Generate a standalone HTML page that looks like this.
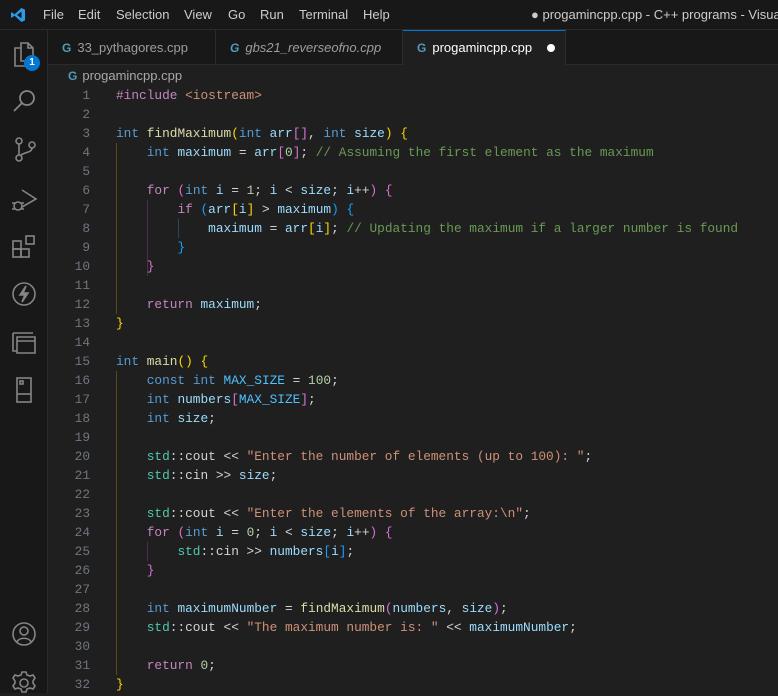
<!DOCTYPE html>
<html><head><meta charset="utf-8"><style>
*{margin:0;padding:0;box-sizing:border-box}
body{width:778px;height:693px;background:#1f1f1f;overflow:hidden;position:relative;font-family:"Segoe UI","Liberation Sans",sans-serif;color:#ccc}
#title{position:absolute;left:0;top:0;width:778px;height:30px;background:#181818;border-bottom:1px solid #2b2b2b;font-size:13px;overflow:hidden;white-space:nowrap}
#title span{position:absolute;top:7px;color:#ccc;white-space:nowrap}
#act{position:absolute;left:0;top:30px;width:48px;height:663px;background:#181818;border-right:1px solid #2b2b2b}
#tabs{position:absolute;left:48px;top:30px;width:730px;height:35px;background:#181818;border-bottom:1px solid #2b2b2b}
.tab{position:absolute;top:0;height:35px;border-right:1px solid #2b2b2b;font-size:13px;color:#9d9d9d;padding:10px 0 0 14px;white-space:nowrap}
.tab b{color:#519aba;font-weight:bold;margin-right:6px;font-size:12px}
.ln{position:absolute;left:48px;width:42px;text-align:right;color:#6e7681;font:12.8px/19px "Liberation Mono",monospace}
.cd{position:absolute;left:116px;white-space:pre;color:#d4d4d4;font:12.8px/19px "Liberation Mono",monospace}
.k{color:#569cd6}.f{color:#dcdcaa}.v{color:#9cdcfe}.c{color:#c586c0}.cm{color:#6a9955}.s{color:#ce9178}.n{color:#b5cea8}.t{color:#4ec9b0}.y{color:#ffd700}.p{color:#da70d6}.b{color:#179fff}.m{color:#4fc1ff}
.g{position:absolute;width:1px}
</style></head><body>
<div id="title">
<svg style="position:absolute;left:10px;top:7px" width="16" height="16" viewBox="0 0 16 16"><path d="M11.5 1 L15 2.6 V13.4 L11.5 15 L4.5 8.6 L1.8 10.7 L1 10.2 V5.8 L1.8 5.3 L4.5 7.4 Z M11.5 4.6 L7 8 L11.5 11.4 Z" fill="#2b9ae8"/></svg>
<span style="left:43px">File</span><span style="left:78px">Edit</span><span style="left:116px">Selection</span><span style="left:184px">View</span><span style="left:228px">Go</span><span style="left:260px">Run</span><span style="left:299px">Terminal</span><span style="left:363px">Help</span>
<span style="left:531px">● progamincpp.cpp - C++ programs - Visual Studio Code</span>
</div>
<div id="act">
<svg style="position:absolute;left:11px;top:10px" width="28" height="30" viewBox="0 0 28 30" fill="none" stroke="#858585" stroke-width="1.6"><path d="M10 3h7l5 5v13H10z M17 3v5h5 M10 8H4v18h12v-5"/></svg>
<div style="position:absolute;left:24px;top:25px;width:16px;height:16px;border-radius:8px;background:#0078d4;color:#fff;font-size:10px;font-weight:bold;text-align:center;line-height:16px">1</div>
<svg style="position:absolute;left:12px;top:58px" width="26" height="26" viewBox="0 0 26 26" fill="none" stroke="#858585" stroke-width="1.8"><circle cx="15" cy="10" r="7"/><path d="M10 15L2 23"/></svg>
<svg style="position:absolute;left:12px;top:106px" width="26" height="28" viewBox="0 0 26 28" fill="none" stroke="#858585" stroke-width="1.6"><circle cx="7" cy="5" r="3"/><circle cx="7" cy="22" r="3"/><circle cx="20" cy="9" r="3"/><path d="M7 8v11 M20 12c0 5-9 4-12 8"/></svg>
<svg style="position:absolute;left:10px;top:158px" width="28" height="26" viewBox="0 0 28 26" fill="none" stroke="#858585" stroke-width="1.6"><path d="M12 2l14 9-14 8"/><circle cx="8" cy="18" r="4"/><path d="M2 15h3 M11 15h3 M2 21h3 M11 21h3"/></svg>
<svg style="position:absolute;left:11px;top:203px" width="28" height="28" viewBox="0 0 28 28" fill="none" stroke="#858585" stroke-width="1.6"><rect x="2" y="8" width="8" height="8"/><rect x="2" y="16" width="8" height="8"/><rect x="10" y="16" width="8" height="8"/><rect x="15" y="3" width="8" height="8"/></svg>
<svg style="position:absolute;left:11px;top:251px" width="26" height="26" viewBox="0 0 26 26" fill="none" stroke="#858585" stroke-width="1.6"><circle cx="13" cy="13" r="11"/><path d="M15 5l-6 9h5l-3 7 6-9h-5z" fill="#858585"/></svg>
<svg style="position:absolute;left:11px;top:299px" width="26" height="26" viewBox="0 0 26 26" fill="none" stroke="#858585" stroke-width="1.6"><path d="M2 4h20 M2 4v18h4 M6 8h18v16H6z M6 12h18"/></svg>
<svg style="position:absolute;left:14px;top:346px" width="20" height="28" viewBox="0 0 20 28" fill="none" stroke="#858585" stroke-width="1.6"><rect x="3" y="2" width="14" height="24"/><path d="M3 18h14"/><rect x="6" y="5" width="3" height="3"/></svg>
<svg style="position:absolute;left:11px;top:591px" width="26" height="26" viewBox="0 0 26 26" fill="none" stroke="#858585" stroke-width="1.6"><circle cx="13" cy="13" r="11"/><circle cx="13" cy="10" r="4"/><path d="M6 21c2-5 12-5 14 0"/></svg>
<svg style="position:absolute;left:11px;top:640px" width="26" height="26" viewBox="0 0 26 26" fill="none" stroke="#858585" stroke-width="1.6"><circle cx="13" cy="13" r="4"/><path d="M11 2h4l1 3 3 1 3-1 2 3-2 3v2l2 3-2 3-3-1-3 1-1 3h-4l-1-3-3-1-3 1-2-3 2-3v-2l-2-3 2-3 3 1 3-1z"/></svg>
</div>
<div id="tabs">
<div class="tab" style="left:0;width:168px"><b>G</b>33_pythagores.cpp</div>
<div class="tab" style="left:168px;width:187px;font-style:italic"><b>G</b>gbs21_reverseofno.cpp</div>
<div class="tab" style="left:355px;width:163px;height:36px;background:#1f1f1f;border-top:1px solid #0078d4;color:#fff;padding-top:9px"><b>G</b>progamincpp.cpp<span style="position:absolute;left:144px;top:13px;width:8px;height:8px;border-radius:4px;background:#fff"></span></div>
</div>
<div style="position:absolute;left:68px;top:68px;font-size:13px;color:#a9a9a9"><b style="color:#519aba;font-size:12px;margin-right:5px">G</b>progamincpp.cpp</div>
<div class="g" style="left:116px;top:143px;height:171px;background:#5a4a1a"></div>
<div class="g" style="left:147px;top:200px;height:76px;background:#4a2f4a"></div>
<div class="g" style="left:178px;top:219px;height:19px;background:#1e4a6a"></div>
<div class="g" style="left:116px;top:371px;height:304px;background:#5a4a1a"></div>
<div class="g" style="left:147px;top:542px;height:19px;background:#4a2f4a"></div>
<div class="ln" style="top:86px">1<br>2<br>3<br>4<br>5<br>6<br>7<br>8<br>9<br>10<br>11<br>12<br>13<br>14<br>15<br>16<br>17<br>18<br>19<br>20<br>21<br>22<br>23<br>24<br>25<br>26<br>27<br>28<br>29<br>30<br>31<br>32</div>
<div class="cd" style="top:86px"><span class="c">#include</span> <span class="s">&lt;iostream&gt;</span>

<span class="k">int</span> <span class="f">findMaximum</span><span class="y">(</span><span class="k">int</span> <span class="v">arr</span><span class="p">[]</span>, <span class="k">int</span> <span class="v">size</span><span class="y">)</span> <span class="y">{</span>
    <span class="k">int</span> <span class="v">maximum</span> = <span class="v">arr</span><span class="p">[</span><span class="n">0</span><span class="p">]</span>; <span class="cm">// Assuming the first element as the maximum</span>

    <span class="c">for</span> <span class="p">(</span><span class="k">int</span> <span class="v">i</span> = <span class="n">1</span>; <span class="v">i</span> &lt; <span class="v">size</span>; <span class="v">i</span>++<span class="p">)</span> <span class="p">{</span>
        <span class="c">if</span> <span class="b">(</span><span class="v">arr</span><span class="y">[</span><span class="v">i</span><span class="y">]</span> &gt; <span class="v">maximum</span><span class="b">)</span> <span class="b">{</span>
            <span class="v">maximum</span> = <span class="v">arr</span><span class="y">[</span><span class="v">i</span><span class="y">]</span>; <span class="cm">// Updating the maximum if a larger number is found</span>
        <span class="b">}</span>
    <span class="p">}</span>

    <span class="c">return</span> <span class="v">maximum</span>;
<span class="y">}</span>

<span class="k">int</span> <span class="f">main</span><span class="y">()</span> <span class="y">{</span>
    <span class="k">const</span> <span class="k">int</span> <span class="m">MAX_SIZE</span> = <span class="n">100</span>;
    <span class="k">int</span> <span class="v">numbers</span><span class="p">[</span><span class="m">MAX_SIZE</span><span class="p">]</span>;
    <span class="k">int</span> <span class="v">size</span>;

    <span class="t">std</span>::cout &lt;&lt; <span class="s">"Enter the number of elements (up to 100): "</span>;
    <span class="t">std</span>::cin &gt;&gt; <span class="v">size</span>;

    <span class="t">std</span>::cout &lt;&lt; <span class="s">"Enter the elements of the array:\n"</span>;
    <span class="c">for</span> <span class="p">(</span><span class="k">int</span> <span class="v">i</span> = <span class="n">0</span>; <span class="v">i</span> &lt; <span class="v">size</span>; <span class="v">i</span>++<span class="p">)</span> <span class="p">{</span>
        <span class="t">std</span>::cin &gt;&gt; <span class="v">numbers</span><span class="b">[</span><span class="v">i</span><span class="b">]</span>;
    <span class="p">}</span>

    <span class="k">int</span> <span class="v">maximumNumber</span> = <span class="f">findMaximum</span><span class="p">(</span><span class="v">numbers</span>, <span class="v">size</span><span class="p">)</span>;
    <span class="t">std</span>::cout &lt;&lt; <span class="s">"The maximum number is: "</span> &lt;&lt; <span class="v">maximumNumber</span>;

    <span class="c">return</span> <span class="n">0</span>;
<span class="y">}</span></div>
</body></html>
